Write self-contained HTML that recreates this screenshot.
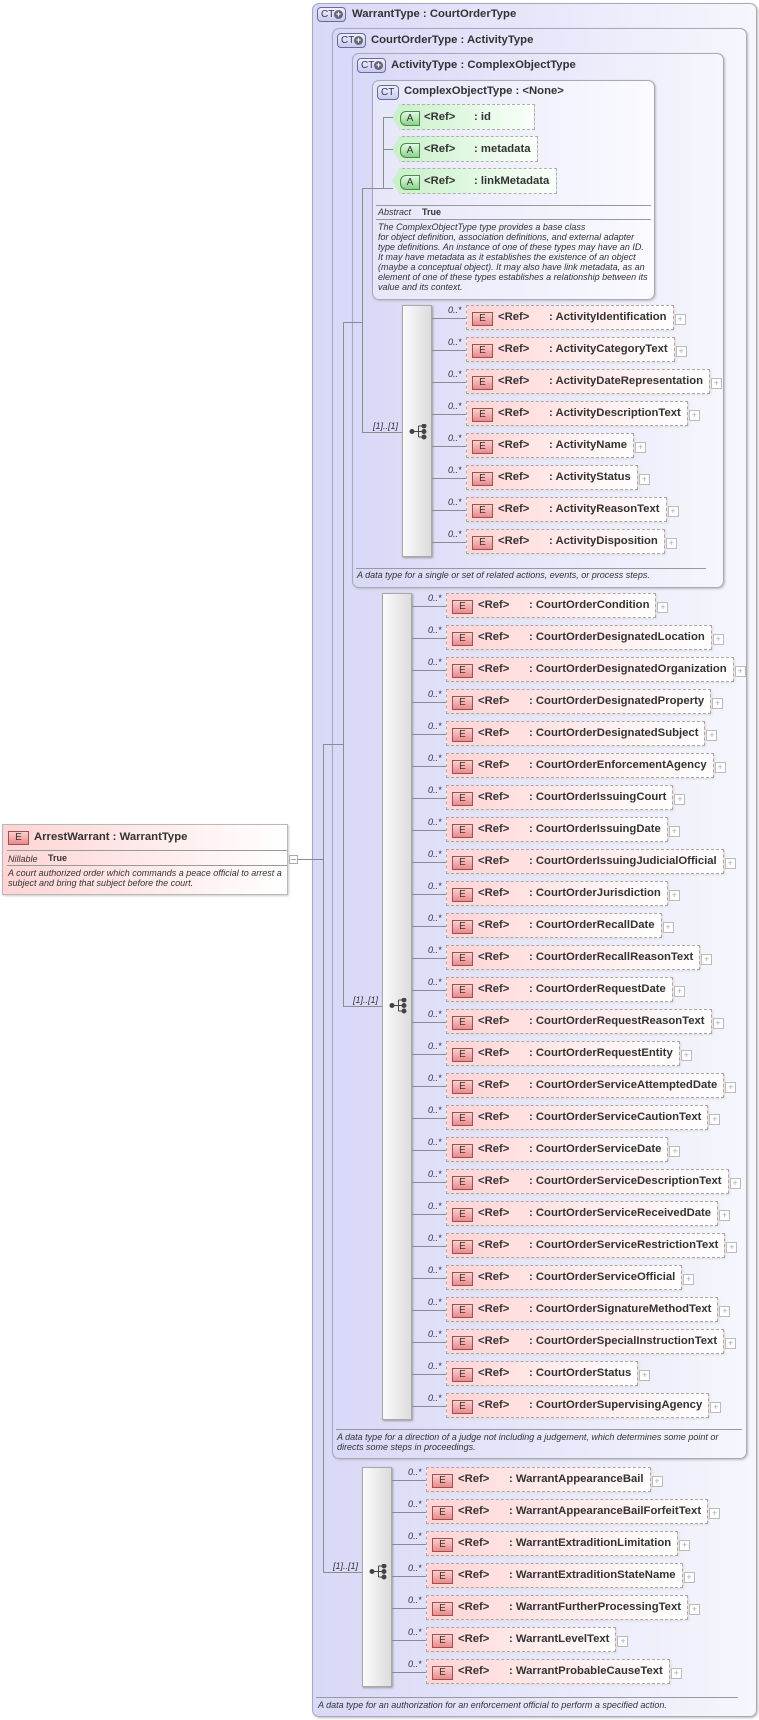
<!DOCTYPE html>
<html><head><meta charset="utf-8"><style>
*{margin:0;padding:0;box-sizing:border-box}
body{width:759px;height:1720px;background:#fff;position:relative;overflow:hidden;font-family:"Liberation Sans",Arial,sans-serif;color:#333}
.bx{position:absolute;border:1px solid #a8a8b8;border-radius:7px;background:linear-gradient(to right,#d8d8f8,#f6f6fd);box-shadow:1px 1px 2px #bbb}
.cx{background:linear-gradient(to right,#e6e6fa,#fafaff)}
.ct{position:absolute;height:15px;border:1px solid #6a6a9a;border-radius:4px;background:linear-gradient(#f0f0ff,#c8c8ee);font:10px/13px "Liberation Sans",sans-serif;color:#335;padding-left:3px}
.ct b{position:absolute;right:2px;top:2px;width:9px;height:9px;border-radius:50%;background:#667;color:#fff;font:bold 9px/9px "Liberation Sans";text-align:center}
.tt{position:absolute;font:bold 11.3px/14px "Liberation Sans",sans-serif;color:#333;white-space:nowrap}
.h{position:absolute;height:1px;background:#8c8c8c}
.v{position:absolute;width:1px;background:#8c8c8c}
.sq{position:absolute;border:1px solid #a8a8a8;background:linear-gradient(to right,#fbfbfb,#dcdcdc);box-shadow:1px 1px 2px #999}
.lb{position:absolute;font:italic 9px "Liberation Sans",sans-serif;color:#333;white-space:nowrap}
.el{position:absolute;height:25px;border:1px dashed #a8a8a8;background:linear-gradient(to right,#ffd4d4,#fff);font:bold 11.3px/23px "Liberation Sans",sans-serif;padding:0 6px 0 82px;white-space:nowrap;color:#333;box-shadow:1px 1px 2px #ddd}
.el i,.E{position:absolute;left:5px;top:6px;width:21px;height:14px;border:1px solid #a05050;background:linear-gradient(#fbd0d0,#ea8a8a);font:normal 10px/12px "Liberation Sans",sans-serif;text-align:center;color:#333;font-style:normal}
.el u{position:absolute;left:31px;text-decoration:none}
.el:after{content:"+";position:absolute;right:-13px;top:8px;width:9px;height:9px;border:1px solid #bbb;background:#fff;font:normal 9px/8px "Liberation Sans";color:#aaa;text-align:center}
.at{position:absolute;height:26px;border:1px dashed #b0b0b0;border-left:none;background:linear-gradient(to right,#c8f0c8,#fafffa);font:bold 11.3px/24px "Liberation Sans",sans-serif;padding:0 8px 0 82px;white-space:nowrap;clip-path:polygon(8px 0,100% 0,100% 100%,8px 100%,0 50%)}
.at i{position:absolute;left:8px;top:6px;width:20px;height:15px;border:1px solid #4a8a4a;border-radius:6px 0 0 6px;background:linear-gradient(#e0ffe0,#8ad08a);font:normal 10px/13px "Liberation Sans";text-align:center;font-style:normal}
.at u{position:absolute;left:32px;text-decoration:none}
.ds{position:absolute;font:italic 9px/10px "Liberation Sans",sans-serif;color:#333;white-space:nowrap}
.sep{position:absolute;height:1px;background:#999}
</style></head><body>

<!-- boxes -->
<div class="bx" style="left:312px;top:3px;width:445px;height:1714px"></div>
<div class="bx" style="left:332px;top:28px;width:415px;height:1431px"></div>
<div class="bx" style="left:352px;top:53px;width:372px;height:535px"></div>
<div class="bx cx" style="left:372px;top:80px;width:283px;height:220px"></div>

<div class="ct" style="left:317px;top:7px;width:29px">CT<b>+</b></div>
<div class="tt" style="left:352px;top:7px">WarrantType : CourtOrderType</div>
<div class="ct" style="left:337px;top:33px;width:29px">CT<b>+</b></div>
<div class="tt" style="left:371px;top:33px">CourtOrderType : ActivityType</div>
<div class="ct" style="left:357px;top:58px;width:29px">CT<b>+</b></div>
<div class="tt" style="left:391px;top:58px">ActivityType : ComplexObjectType</div>
<div class="ct" style="left:377px;top:85px;width:22px">CT</div>
<div class="tt" style="left:404px;top:84px">ComplexObjectType : &lt;None&gt;</div>

<!-- attributes -->
<div class="at" style="left:392px;top:104px;width:143px"><i>A</i><u>&lt;Ref&gt;</u>: id</div>
<div class="at" style="left:392px;top:136px;width:146px"><i>A</i><u>&lt;Ref&gt;</u>: metadata</div>
<div class="at" style="left:392px;top:168px;width:165px"><i>A</i><u>&lt;Ref&gt;</u>: linkMetadata</div>
<div class="v" style="left:383px;top:117px;height:72px"></div>
<div class="h" style="left:383px;top:117px;width:10px"></div>
<div class="h" style="left:383px;top:149px;width:10px"></div>
<div class="h" style="left:362px;top:188px;width:31px"></div>

<div class="sep" style="left:376px;top:205px;width:275px"></div>
<div class="ds" style="left:378px;top:207px">Abstract</div>
<div class="ds" style="left:422px;top:207px;font-style:normal;font-weight:bold">True</div>
<div class="sep" style="left:376px;top:219px;width:275px"></div>
<div class="ds" style="left:378px;top:222px">The ComplexObjectType type provides a base class<br>for object definition, association definitions, and external adapter<br>type definitions. An instance of one of these types may have an ID.<br>It may have metadata as it establishes the existence of an object<br>(maybe a conceptual object). It may also have link metadata, as an<br>element of one of these types establishes a relationship between its<br>value and its context.</div>

<!-- tree connectors -->
<div class="h" style="left:297px;top:859px;width:26px"></div>
<div class="v" style="left:323px;top:744px;height:829px"></div>
<div class="h" style="left:323px;top:744px;width:20px"></div>
<div class="h" style="left:323px;top:1572px;width:39px"></div>
<div class="v" style="left:343px;top:322px;height:685px"></div>
<div class="h" style="left:343px;top:322px;width:19px"></div>
<div class="h" style="left:343px;top:1006px;width:39px"></div>
<div class="v" style="left:362px;top:188px;height:245px"></div>
<div class="h" style="left:362px;top:432px;width:40px"></div>

<div class="lb" style="left:373px;top:421px">[1]..[1]</div>
<div class="lb" style="left:353px;top:995px">[1]..[1]</div>
<div class="lb" style="left:333px;top:1561px">[1]..[1]</div>

<!-- root element -->
<div style="position:absolute;left:2px;top:824px;width:286px;height:71px;border:1px solid #b8b8b8;background:linear-gradient(to right,#ffd4d4,#fff);box-shadow:1px 1px 2px #ccc">
<span class="E" style="left:5px;top:6px">E</span>
<div class="tt" style="left:31px;top:5px">ArrestWarrant : WarrantType</div>
<div class="sep" style="left:4px;top:25px;width:280px"></div>
<div class="ds" style="left:5px;top:29px">Nillable</div>
<div class="ds" style="left:45px;top:28px;font-style:normal;font-weight:bold">True</div>
<div class="sep" style="left:4px;top:40px;width:280px"></div>
<div class="ds" style="left:5px;top:43px">A court authorized order which commands a peace official to arrest a<br>subject and bring that subject before the court.</div>
</div>
<div style="position:absolute;left:289px;top:855px;width:9px;height:9px;border:1px solid #aaa;background:#fff"><div style="position:absolute;left:1px;top:3px;width:5px;height:1px;background:#aaa"></div></div>

<!-- sequences -->
<div class="sq" style="left:402px;top:305px;width:30px;height:252px"></div>
<div class="sq" style="left:382px;top:593px;width:30px;height:827px"></div>
<div class="sq" style="left:362px;top:1467px;width:30px;height:220px"></div>
<svg style="position:absolute;left:409px;top:424px" width="20" height="16" viewBox="0 0 20 16"><g fill="#444" stroke="#444"><circle cx="3" cy="7.5" r="2"/><line x1="3" y1="7.5" x2="9" y2="7.5"/><line x1="9.5" y1="2" x2="9.5" y2="13"/><line x1="9.5" y1="2" x2="14" y2="2"/><line x1="9.5" y1="7.5" x2="14" y2="7.5"/><line x1="9.5" y1="13" x2="14" y2="13"/><circle cx="15" cy="2" r="2"/><circle cx="15" cy="7.5" r="2"/><circle cx="15" cy="13" r="2"/></g></svg>
<svg style="position:absolute;left:389px;top:998px" width="20" height="16" viewBox="0 0 20 16"><g fill="#444" stroke="#444"><circle cx="3" cy="7.5" r="2"/><line x1="3" y1="7.5" x2="9" y2="7.5"/><line x1="9.5" y1="2" x2="9.5" y2="13"/><line x1="9.5" y1="2" x2="14" y2="2"/><line x1="9.5" y1="7.5" x2="14" y2="7.5"/><line x1="9.5" y1="13" x2="14" y2="13"/><circle cx="15" cy="2" r="2"/><circle cx="15" cy="7.5" r="2"/><circle cx="15" cy="13" r="2"/></g></svg>
<svg style="position:absolute;left:369px;top:1564px" width="20" height="16" viewBox="0 0 20 16"><g fill="#444" stroke="#444"><circle cx="3" cy="7.5" r="2"/><line x1="3" y1="7.5" x2="9" y2="7.5"/><line x1="9.5" y1="2" x2="9.5" y2="13"/><line x1="9.5" y1="2" x2="14" y2="2"/><line x1="9.5" y1="7.5" x2="14" y2="7.5"/><line x1="9.5" y1="13" x2="14" y2="13"/><circle cx="15" cy="2" r="2"/><circle cx="15" cy="7.5" r="2"/><circle cx="15" cy="13" r="2"/></g></svg>

<!-- seq1 rows -->
<div class="h" style="left:432px;top:318px;width:34px"></div><div class="lb" style="left:448px;top:305px">0..*</div><div class="el" style="left:466px;top:305px"><i>E</i><u>&lt;Ref&gt;</u>: ActivityIdentification</div>
<div class="h" style="left:432px;top:350px;width:34px"></div><div class="lb" style="left:448px;top:337px">0..*</div><div class="el" style="left:466px;top:337px"><i>E</i><u>&lt;Ref&gt;</u>: ActivityCategoryText</div>
<div class="h" style="left:432px;top:382px;width:34px"></div><div class="lb" style="left:448px;top:369px">0..*</div><div class="el" style="left:466px;top:369px"><i>E</i><u>&lt;Ref&gt;</u>: ActivityDateRepresentation</div>
<div class="h" style="left:432px;top:414px;width:34px"></div><div class="lb" style="left:448px;top:401px">0..*</div><div class="el" style="left:466px;top:401px"><i>E</i><u>&lt;Ref&gt;</u>: ActivityDescriptionText</div>
<div class="h" style="left:432px;top:446px;width:34px"></div><div class="lb" style="left:448px;top:433px">0..*</div><div class="el" style="left:466px;top:433px"><i>E</i><u>&lt;Ref&gt;</u>: ActivityName</div>
<div class="h" style="left:432px;top:478px;width:34px"></div><div class="lb" style="left:448px;top:465px">0..*</div><div class="el" style="left:466px;top:465px"><i>E</i><u>&lt;Ref&gt;</u>: ActivityStatus</div>
<div class="h" style="left:432px;top:510px;width:34px"></div><div class="lb" style="left:448px;top:497px">0..*</div><div class="el" style="left:466px;top:497px"><i>E</i><u>&lt;Ref&gt;</u>: ActivityReasonText</div>
<div class="h" style="left:432px;top:542px;width:34px"></div><div class="lb" style="left:448px;top:529px">0..*</div><div class="el" style="left:466px;top:529px"><i>E</i><u>&lt;Ref&gt;</u>: ActivityDisposition</div>
<div class="sep" style="left:356px;top:568px;width:350px"></div>
<div class="ds" style="left:357px;top:570px">A data type for a single or set of related actions, events, or process steps.</div>

<!-- seq2 rows -->
<div class="h" style="left:412px;top:606px;width:34px"></div><div class="lb" style="left:428px;top:593px">0..*</div><div class="el" style="left:446px;top:593px"><i>E</i><u>&lt;Ref&gt;</u>: CourtOrderCondition</div>
<div class="h" style="left:412px;top:638px;width:34px"></div><div class="lb" style="left:428px;top:625px">0..*</div><div class="el" style="left:446px;top:625px"><i>E</i><u>&lt;Ref&gt;</u>: CourtOrderDesignatedLocation</div>
<div class="h" style="left:412px;top:670px;width:34px"></div><div class="lb" style="left:428px;top:657px">0..*</div><div class="el" style="left:446px;top:657px"><i>E</i><u>&lt;Ref&gt;</u>: CourtOrderDesignatedOrganization</div>
<div class="h" style="left:412px;top:702px;width:34px"></div><div class="lb" style="left:428px;top:689px">0..*</div><div class="el" style="left:446px;top:689px"><i>E</i><u>&lt;Ref&gt;</u>: CourtOrderDesignatedProperty</div>
<div class="h" style="left:412px;top:734px;width:34px"></div><div class="lb" style="left:428px;top:721px">0..*</div><div class="el" style="left:446px;top:721px"><i>E</i><u>&lt;Ref&gt;</u>: CourtOrderDesignatedSubject</div>
<div class="h" style="left:412px;top:766px;width:34px"></div><div class="lb" style="left:428px;top:753px">0..*</div><div class="el" style="left:446px;top:753px"><i>E</i><u>&lt;Ref&gt;</u>: CourtOrderEnforcementAgency</div>
<div class="h" style="left:412px;top:798px;width:34px"></div><div class="lb" style="left:428px;top:785px">0..*</div><div class="el" style="left:446px;top:785px"><i>E</i><u>&lt;Ref&gt;</u>: CourtOrderIssuingCourt</div>
<div class="h" style="left:412px;top:830px;width:34px"></div><div class="lb" style="left:428px;top:817px">0..*</div><div class="el" style="left:446px;top:817px"><i>E</i><u>&lt;Ref&gt;</u>: CourtOrderIssuingDate</div>
<div class="h" style="left:412px;top:862px;width:34px"></div><div class="lb" style="left:428px;top:849px">0..*</div><div class="el" style="left:446px;top:849px"><i>E</i><u>&lt;Ref&gt;</u>: CourtOrderIssuingJudicialOfficial</div>
<div class="h" style="left:412px;top:894px;width:34px"></div><div class="lb" style="left:428px;top:881px">0..*</div><div class="el" style="left:446px;top:881px"><i>E</i><u>&lt;Ref&gt;</u>: CourtOrderJurisdiction</div>
<div class="h" style="left:412px;top:926px;width:34px"></div><div class="lb" style="left:428px;top:913px">0..*</div><div class="el" style="left:446px;top:913px"><i>E</i><u>&lt;Ref&gt;</u>: CourtOrderRecallDate</div>
<div class="h" style="left:412px;top:958px;width:34px"></div><div class="lb" style="left:428px;top:945px">0..*</div><div class="el" style="left:446px;top:945px"><i>E</i><u>&lt;Ref&gt;</u>: CourtOrderRecallReasonText</div>
<div class="h" style="left:412px;top:990px;width:34px"></div><div class="lb" style="left:428px;top:977px">0..*</div><div class="el" style="left:446px;top:977px"><i>E</i><u>&lt;Ref&gt;</u>: CourtOrderRequestDate</div>
<div class="h" style="left:412px;top:1022px;width:34px"></div><div class="lb" style="left:428px;top:1009px">0..*</div><div class="el" style="left:446px;top:1009px"><i>E</i><u>&lt;Ref&gt;</u>: CourtOrderRequestReasonText</div>
<div class="h" style="left:412px;top:1054px;width:34px"></div><div class="lb" style="left:428px;top:1041px">0..*</div><div class="el" style="left:446px;top:1041px"><i>E</i><u>&lt;Ref&gt;</u>: CourtOrderRequestEntity</div>
<div class="h" style="left:412px;top:1086px;width:34px"></div><div class="lb" style="left:428px;top:1073px">0..*</div><div class="el" style="left:446px;top:1073px"><i>E</i><u>&lt;Ref&gt;</u>: CourtOrderServiceAttemptedDate</div>
<div class="h" style="left:412px;top:1118px;width:34px"></div><div class="lb" style="left:428px;top:1105px">0..*</div><div class="el" style="left:446px;top:1105px"><i>E</i><u>&lt;Ref&gt;</u>: CourtOrderServiceCautionText</div>
<div class="h" style="left:412px;top:1150px;width:34px"></div><div class="lb" style="left:428px;top:1137px">0..*</div><div class="el" style="left:446px;top:1137px"><i>E</i><u>&lt;Ref&gt;</u>: CourtOrderServiceDate</div>
<div class="h" style="left:412px;top:1182px;width:34px"></div><div class="lb" style="left:428px;top:1169px">0..*</div><div class="el" style="left:446px;top:1169px"><i>E</i><u>&lt;Ref&gt;</u>: CourtOrderServiceDescriptionText</div>
<div class="h" style="left:412px;top:1214px;width:34px"></div><div class="lb" style="left:428px;top:1201px">0..*</div><div class="el" style="left:446px;top:1201px"><i>E</i><u>&lt;Ref&gt;</u>: CourtOrderServiceReceivedDate</div>
<div class="h" style="left:412px;top:1246px;width:34px"></div><div class="lb" style="left:428px;top:1233px">0..*</div><div class="el" style="left:446px;top:1233px"><i>E</i><u>&lt;Ref&gt;</u>: CourtOrderServiceRestrictionText</div>
<div class="h" style="left:412px;top:1278px;width:34px"></div><div class="lb" style="left:428px;top:1265px">0..*</div><div class="el" style="left:446px;top:1265px"><i>E</i><u>&lt;Ref&gt;</u>: CourtOrderServiceOfficial</div>
<div class="h" style="left:412px;top:1310px;width:34px"></div><div class="lb" style="left:428px;top:1297px">0..*</div><div class="el" style="left:446px;top:1297px"><i>E</i><u>&lt;Ref&gt;</u>: CourtOrderSignatureMethodText</div>
<div class="h" style="left:412px;top:1342px;width:34px"></div><div class="lb" style="left:428px;top:1329px">0..*</div><div class="el" style="left:446px;top:1329px"><i>E</i><u>&lt;Ref&gt;</u>: CourtOrderSpecialInstructionText</div>
<div class="h" style="left:412px;top:1374px;width:34px"></div><div class="lb" style="left:428px;top:1361px">0..*</div><div class="el" style="left:446px;top:1361px"><i>E</i><u>&lt;Ref&gt;</u>: CourtOrderStatus</div>
<div class="h" style="left:412px;top:1406px;width:34px"></div><div class="lb" style="left:428px;top:1393px">0..*</div><div class="el" style="left:446px;top:1393px"><i>E</i><u>&lt;Ref&gt;</u>: CourtOrderSupervisingAgency</div>
<div class="sep" style="left:336px;top:1429px;width:406px"></div>
<div class="ds" style="left:337px;top:1432px">A data type for a direction of a judge not including a judgement, which determines some point or<br>directs some steps in proceedings.</div>

<!-- seq3 rows -->
<div class="h" style="left:392px;top:1480px;width:34px"></div><div class="lb" style="left:408px;top:1467px">0..*</div><div class="el" style="left:426px;top:1467px"><i>E</i><u>&lt;Ref&gt;</u>: WarrantAppearanceBail</div>
<div class="h" style="left:392px;top:1512px;width:34px"></div><div class="lb" style="left:408px;top:1499px">0..*</div><div class="el" style="left:426px;top:1499px"><i>E</i><u>&lt;Ref&gt;</u>: WarrantAppearanceBailForfeitText</div>
<div class="h" style="left:392px;top:1544px;width:34px"></div><div class="lb" style="left:408px;top:1531px">0..*</div><div class="el" style="left:426px;top:1531px"><i>E</i><u>&lt;Ref&gt;</u>: WarrantExtraditionLimitation</div>
<div class="h" style="left:392px;top:1576px;width:34px"></div><div class="lb" style="left:408px;top:1563px">0..*</div><div class="el" style="left:426px;top:1563px"><i>E</i><u>&lt;Ref&gt;</u>: WarrantExtraditionStateName</div>
<div class="h" style="left:392px;top:1608px;width:34px"></div><div class="lb" style="left:408px;top:1595px">0..*</div><div class="el" style="left:426px;top:1595px"><i>E</i><u>&lt;Ref&gt;</u>: WarrantFurtherProcessingText</div>
<div class="h" style="left:392px;top:1640px;width:34px"></div><div class="lb" style="left:408px;top:1627px">0..*</div><div class="el" style="left:426px;top:1627px"><i>E</i><u>&lt;Ref&gt;</u>: WarrantLevelText</div>
<div class="h" style="left:392px;top:1672px;width:34px"></div><div class="lb" style="left:408px;top:1659px">0..*</div><div class="el" style="left:426px;top:1659px"><i>E</i><u>&lt;Ref&gt;</u>: WarrantProbableCauseText</div>
<div class="sep" style="left:316px;top:1697px;width:422px"></div>
<div class="ds" style="left:318px;top:1700px">A data type for an authorization for an enforcement official to perform a specified action.</div>

</body></html>
